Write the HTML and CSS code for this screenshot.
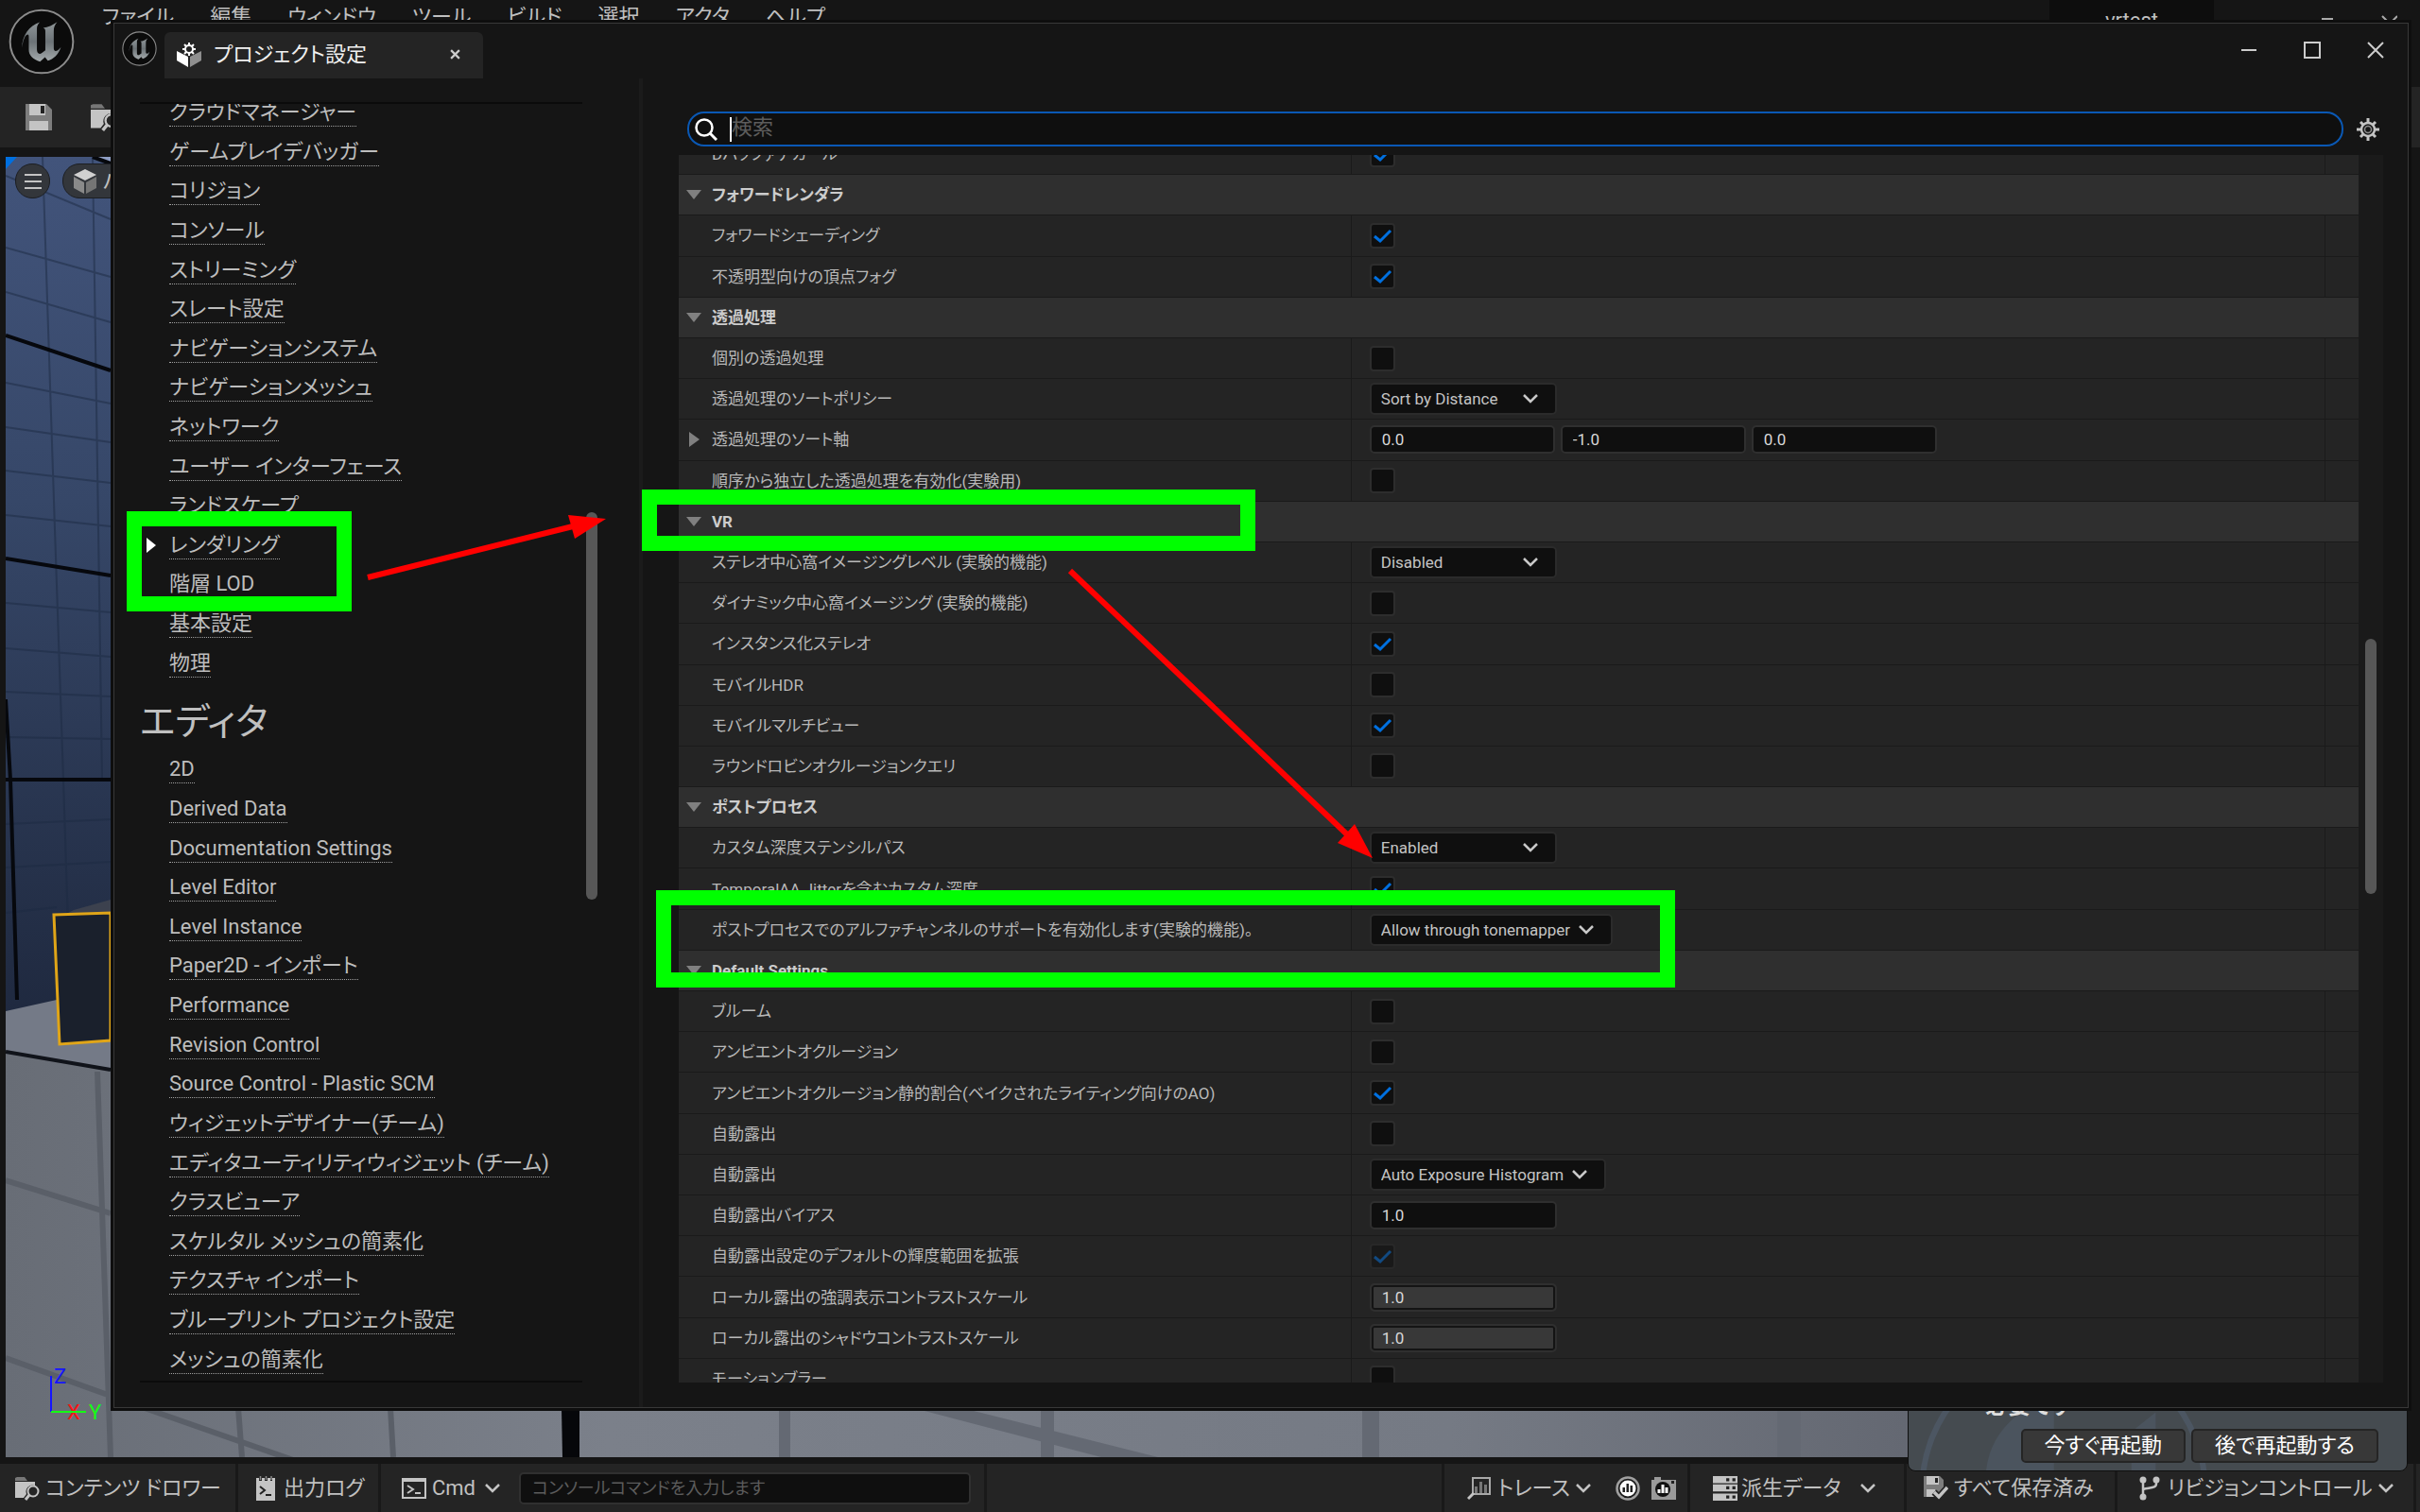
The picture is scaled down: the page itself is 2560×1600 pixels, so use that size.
FILE: index.html
```html
<!DOCTYPE html>
<html lang="ja">
<head>
  <meta charset="UTF-8">
  <meta name="viewport" content="width=device-width, initial-scale=1.0">
  <title>プロジェクト設定</title>
  <link rel="stylesheet" href="styles.css">
</head>
<body>
  <!-- Icon sprites -->
  <svg class="sprites" aria-hidden="true">
    <defs>
      <linearGradient id="metal" x1="0" y1="0" x2="0" y2="1">
        <stop offset="0" stop-color="#8f9699"/>
        <stop offset="0.5" stop-color="#6c7377"/>
        <stop offset="1" stop-color="#a3a9ab"/>
      </linearGradient>
    </defs>
    <symbol id="i-logo" viewBox="26 26 212 212">
      <circle cx="132" cy="132" r="101" fill="#0b0b0b" stroke="#8c8c8c" stroke-width="6"/>
      <path fill="url(#metal)" d="M69 152C70 112 92 82 126 70C118 78 117 84 117 92V158C117 170 125 175 133 168L144 160V98C144 92 141 89 137 88C152 86 168 79 182 69C174 78 171 86 171 98V154C172 168 184 162 194 150C186 174 170 188 152 193L143 182L127 196C104 190 91 176 91 158V116C91 106 84 108 78 118C74 126 71 138 69 152Z"/>
    </symbol>
    <symbol id="i-settings" viewBox="0 0 26 26">
      <path d="M0 9L12 15V26L0 19Z" fill="#fff"/>
      <path d="M26 9L14 15V26L26 19Z" fill="#8f8f8f"/>
      <circle cx="13" cy="7" r="4" fill="none" stroke="#fff" stroke-width="2"/>
      <path d="M13 0V3M13 11V14M6 7H9M17 7H20M8 2L10 4M16 10L18 12M18 2L16 4M10 10L8 12" stroke="#fff" stroke-width="2"/>
    </symbol>
    <symbol id="i-save" viewBox="0 0 30 30">
      <path d="M1 1H23L29 7V29H1Z" fill="#7d7d7d"/>
      <path d="M5 1H22V13H5Z" fill="#c4c4c4"/>
      <path d="M17 3H21V11H17Z" fill="#222"/>
      <path d="M5 19H25V29H5Z" fill="#c4c4c4"/>
    </symbol>
    <symbol id="i-folder" viewBox="0 0 26 26">
      <path d="M0 5V2L2 1H10L13 5Z" fill="#777"/>
      <path d="M0 6H21V10A7 7 0 0 0 12 19L9 23H0Z" fill="#c4c4c4"/>
      <circle cx="19" cy="16" r="5.500" fill="none" stroke="#c4c4c4" stroke-width="2"/>
      <path d="M15 20L11 25" stroke="#c4c4c4" stroke-width="3"/>
    </symbol>
    <symbol id="i-log" viewBox="0 0 20 26">
      <path d="M0 2H3V5H6V2H9V5H12V2H15V5H17V2H20V26H0Z" fill="#c4c4c4"/>
      <path d="M4.500 0V4M10.500 0V4M16 0V4" stroke="#8a8a8a" stroke-width="1.500"/>
      <path d="M4 11L9 15L4 19M10 20H16" fill="none" stroke="#222" stroke-width="2"/>
    </symbol>
    <symbol id="i-cmd" viewBox="0 0 26 22">
      <path d="M1 1H25V21H1Z" fill="none" stroke="#c4c4c4" stroke-width="2"/>
      <path d="M1 1H25V4H1Z" fill="#c4c4c4"/>
      <path d="M6 8L12 12L6 16M14 16H20" fill="none" stroke="#c4c4c4" stroke-width="2"/>
    </symbol>
    <symbol id="i-chevron" viewBox="0 0 16 10">
      <path d="M1 1L8 8L15 1" fill="none" stroke="#c4c4c4" stroke-width="2.500"/>
    </symbol>
    <symbol id="i-trace" viewBox="0 0 26 24">
      <path d="M6 1H24V18H6Z" fill="none" stroke="#a8a8a8" stroke-width="2"/>
      <path d="M8 17V10H11V17ZM13 17V5H16V17ZM18 17V8H21V17Z" fill="#777"/>
      <path d="M1 23L7 17" stroke="#c4c4c4" stroke-width="3"/>
    </symbol>
    <symbol id="i-live" viewBox="0 0 26 26">
      <circle cx="13" cy="13" r="11.500" fill="#1a1a1a" stroke="#a0a0a0" stroke-width="2.500"/>
      <circle cx="13" cy="13" r="8.500" fill="#fff"/>
      <path d="M7.500 17V12H10V17ZM11.500 17V8H14V17ZM15.500 17V10H18V17Z" fill="#222"/>
    </symbol>
    <symbol id="i-snapshot" viewBox="0 0 26 26">
      <path d="M0 4H3V1H10V4H26V25H0Z" fill="#9a9a9a"/>
      <circle cx="12" cy="14" r="8" fill="#111"/>
      <path d="M6.500 18V14H9.500V18ZM10.500 18V9H13.500V18ZM14.500 18V12H17.500V18Z" fill="#fff"/>
      <path d="M21 5H24V8H21Z" fill="#222"/>
    </symbol>
    <symbol id="i-data" viewBox="0 0 24 24">
      <path d="M0 0H24V7H0ZM0 8H24V15H0ZM0 17H24V24H0Z" fill="#c4c4c4"/>
      <path d="M13 2H16V5H13ZM19 2H22V5H19ZM13 10H16V13H13ZM19 10H22V13H19ZM13 19H16V22H13ZM19 19H22V22H19Z" fill="#222"/>
    </symbol>
    <symbol id="i-saved" viewBox="0 0 26 26">
      <path d="M0 0H17L21 4V22H0Z" fill="#7d7d7d"/>
      <path d="M3 0H16V9H3ZM3 14H12V22H3Z" fill="#c4c4c4"/>
      <path d="M12 2H15V7H12Z" fill="#222"/>
      <path d="M11 17L16 22L25 12" fill="none" stroke="#242424" stroke-width="7"/>
      <path d="M11 17L16 22L25 12" fill="none" stroke="#c4c4c4" stroke-width="3.500"/>
    </symbol>
    <symbol id="i-branch" viewBox="0 0 22 26">
      <circle cx="4" cy="4" r="3.500" fill="#c4c4c4"/>
      <circle cx="18" cy="4" r="3.500" fill="#c4c4c4"/>
      <circle cx="4" cy="22" r="3.500" fill="#c4c4c4"/>
      <path d="M4 4V22M18 4V8C18 13 12 12 4 14" fill="none" stroke="#c4c4c4" stroke-width="2.500"/>
    </symbol>
    <symbol id="i-gear" viewBox="0 0 24 24">
      <path d="M12 0V5M12 19V24M0 12H5M19 12H24M4 4L7 7M17 17L20 20M20 4L17 7M7 17L4 20" stroke="#c4c4c4" stroke-width="3"/>
      <circle cx="12" cy="12" r="7" fill="none" stroke="#c4c4c4" stroke-width="2.500"/>
      <circle cx="12" cy="12" r="3.500" fill="none" stroke="#8a8a8a" stroke-width="1.500"/>
    </symbol>
    <symbol id="i-search" viewBox="0 0 24 24">
      <circle cx="10" cy="10" r="8.500" fill="none" stroke="#fff" stroke-width="2.500"/>
      <path d="M16 16L23 23" stroke="#fff" stroke-width="3"/>
    </symbol>
  </svg>

  <div class="editor">
    <!-- Level editor title bar -->
    <header class="titlebar">
      <svg class="logo"><use href="#i-logo"/></svg>
      <nav class="menubar">
        <button>ファイル</button>
        <button>編集</button>
        <button>ウィンドウ</button>
        <button>ツール</button>
        <button>ビルド</button>
        <button>選択</button>
        <button>アクタ</button>
        <button>ヘルプ</button>
      </nav>
      <div class="project-name">vrtest</div>
      <div class="editor-controls">
        <svg viewBox="0 0 80 20"><path d="M0 9H12M64 6L80 22M80 6L64 22" fill="none" stroke="#aaa" stroke-width="2"/></svg>
      </div>
    </header>

    <div class="toolbar">
      <svg class="tool"><use href="#i-save"/></svg>
      <svg class="tool"><use href="#i-folder"/></svg>
    </div>

    <!-- Viewport scene -->
    <main class="viewport">
      <svg class="scene" viewBox="6 166 2541 1376" preserveAspectRatio="xMinYMin slice">
        <defs>
          <linearGradient id="wall" x1="0" y1="0" x2="0" y2="1">
            <stop offset="0" stop-color="#42547b"/>
            <stop offset="0.4" stop-color="#364768"/>
            <stop offset="1" stop-color="#1f293f"/>
          </linearGradient>
          <linearGradient id="floor" x1="0" y1="0" x2="1" y2="0">
            <stop offset="0" stop-color="#686d76"/>
            <stop offset="0.25" stop-color="#7b808a"/>
            <stop offset="0.6" stop-color="#757a84"/>
            <stop offset="0.8" stop-color="#636771"/>
            <stop offset="1" stop-color="#5d616b"/>
          </linearGradient>
        </defs>
        <path d="M6 166H2552V1075H6Z" fill="url(#wall)"/>
        <path d="M98 166H117V174Z" fill="#8f9fc4"/>
        <path d="M6 186L117 232M6 262L117 293M6 309L117 341M6 405L117 427M6 452L117 468M6 498L117 511M6 545L117 557M6 638L117 648M6 686L117 695M6 732L117 737M6 780L117 782M6 872L117 867M6 918L117 912M6 966L60 960M45 166L58 560L67 825L72 980M98 166L104 560L108 825" fill="none" stroke="#1c2942" stroke-width="2" opacity="0.5"/>
        <path d="M6 355L117 392M6 591L117 609M6 825H117M6 740L11 825L18 1058M98 166L117 173" fill="none" stroke="#06080d" stroke-width="4"/>
        <path d="M78 963L117 952V966H72Z" fill="#3c414e"/>
        <path d="M6 1070L60 1058H117V1140H6Z" fill="#747a87"/>
        <path d="M57 968L117 966V1101L63 1105Z" fill="#1a202c" stroke="#e0a518" stroke-width="3"/>
        <path d="M6 1113L117 1132H2552V1542H6Z" fill="url(#floor)"/>
        <path d="M6 1113L117 1132" stroke="#10131a" stroke-width="4"/>
        <path d="M103 1134L117 1542M6 1249L117 1284M6 1437L150 1489L310 1545M252 1490L256 1542M413 1490L416 1542" fill="none" stroke="#5a5f68" stroke-width="6"/>
        <path d="M594 1490H613V1542H595Z" fill="#06070a"/>
        <path d="M824 1490H836V1542H824ZM1101 1490H1115V1542H1101ZM1441 1490H1459V1542H1441ZM1880 1490H1905V1542H1880ZM978 1493H1030L1225 1542H1165Z" fill="#646973"/>
        <path d="M6 166H18L6 179Z" fill="#0070e0"/>
        <!-- axis gizmo -->
        <path d="M54 1456V1494" stroke="#1414ff" stroke-width="2"/>
        <text class="axis" x="71" y="1502" fill="#ff1414">X</text>
        <path d="M54 1494H91" stroke="#14ff14" stroke-width="2"/>
        <text class="axis" x="57" y="1464" fill="#1414ff">Z</text>
        <text class="axis" x="94" y="1502" fill="#14ff14">Y</text>
      </svg>
      <div class="viewport-tools">
        <button class="round" aria-label="ビューポートオプション">
          <svg viewBox="0 0 18 16"><path d="M0 1H18M0 8H18M0 15H18" stroke="#c4c4c4" stroke-width="2"/></svg>
        </button>
        <button class="pill">
          <svg viewBox="0 0 26 26"><path d="M13 0L25 6L13 12L1 6Z" fill="#d0d0d0"/><path d="M1 8L12 14V26L1 20Z" fill="#8a8a8a"/><path d="M25 8L14 14V26L25 20Z" fill="#757575"/></svg>
          パースペクティブ
        </button>
      </div>
    </main>

    <!-- Status bar -->
    <footer class="statusbar">
      <button class="status drawer"><svg class="icon"><use href="#i-folder"/></svg>コンテンツ ドロワー</button>
      <button class="status log"><svg class="icon narrow"><use href="#i-log"/></svg>出力ログ</button>
      <div class="status console">
        <button><svg class="icon"><use href="#i-cmd"/></svg>Cmd<svg class="chevron"><use href="#i-chevron"/></svg></button>
        <input type="text" placeholder="コンソールコマンドを入力します" aria-label="コンソールコマンド">
      </div>
      <div class="spacer"></div>
      <div class="status trace">
        <button><svg class="icon"><use href="#i-trace"/></svg>トレース<svg class="chevron"><use href="#i-chevron"/></svg></button>
        <button aria-label="トレース開始"><svg class="icon"><use href="#i-live"/></svg></button>
        <button aria-label="スナップショット"><svg class="icon"><use href="#i-snapshot"/></svg></button>
      </div>
      <button class="status derived"><svg class="icon"><use href="#i-data"/></svg>派生データ<svg class="chevron"><use href="#i-chevron"/></svg></button>
      <button class="status saved"><svg class="icon"><use href="#i-saved"/></svg>すべて保存済み</button>
      <button class="status revision"><svg class="icon"><use href="#i-branch"/></svg>リビジョンコントロール<svg class="chevron"><use href="#i-chevron"/></svg></button>
    </footer>
  </div>

  <!-- Restart notification -->
  <div class="toast">
    <svg class="toast-art" viewBox="0 0 530 80" preserveAspectRatio="xMinYMax slice">
      <circle cx="160" cy="100" r="146" fill="none" stroke="#4c5662" stroke-width="6"/>
      <path d="M80 80C85 40 110 20 150 0V80Z" fill="#4b545e"/>
      <path d="M230 80V40L255 20V80Z" fill="#4b545e"/>
    </svg>
    <p>必要です</p>
    <div class="toast-buttons">
      <button>今すぐ再起動</button>
      <button>後で再起動する</button>
    </div>
  </div>

  <!-- Project settings window -->
  <section class="dialog">
    <div class="dialog-inner">
      <header class="dialog-head">
        <svg class="dialog-logo"><use href="#i-logo"/></svg>
        <div class="tab">
          <svg class="icon"><use href="#i-settings"/></svg>
          <span>プロジェクト設定</span>
          <button aria-label="タブを閉じる"><svg viewBox="0 0 10 10"><path d="M1 1L9 9M9 1L1 9" stroke="#ccc" stroke-width="2"/></svg></button>
        </div>
        <div class="window-controls">
          <button aria-label="最小化"><svg viewBox="0 0 18 18"><path d="M1 9H17" stroke="#ccc" stroke-width="2"/></svg></button>
          <button aria-label="最大化"><svg viewBox="0 0 18 18"><path d="M1 1H17V17H1Z" fill="none" stroke="#ccc" stroke-width="2"/></svg></button>
          <button aria-label="閉じる"><svg viewBox="0 0 18 18"><path d="M1 1L17 17M17 1L1 17" stroke="#ccc" stroke-width="2"/></svg></button>
        </div>
      </header>

      <div class="dialog-body">
        <aside class="sidebar">
          <div class="categories">
            <ul class="engine">
              <li><a href="#">クラウドマネージャー</a></li>
              <li><a href="#">ゲームプレイデバッガー</a></li>
              <li><a href="#">コリジョン</a></li>
              <li><a href="#">コンソール</a></li>
              <li><a href="#">ストリーミング</a></li>
              <li><a href="#">スレート設定</a></li>
              <li><a href="#">ナビゲーションシステム</a></li>
              <li><a href="#">ナビゲーションメッシュ</a></li>
              <li><a href="#">ネットワーク</a></li>
              <li><a href="#">ユーザー インターフェース</a></li>
              <li><a href="#">ランドスケープ</a></li>
              <li class="current"><a href="#">レンダリング</a></li>
              <li><a href="#">階層 LOD</a></li>
              <li><a href="#">基本設定</a></li>
              <li><a href="#">物理</a></li>
            </ul>
            <h2>エディタ</h2>
            <ul class="editor-list">
              <li><a href="#">2D</a></li>
              <li><a href="#">Derived Data</a></li>
              <li><a href="#">Documentation Settings</a></li>
              <li><a href="#">Level Editor</a></li>
              <li><a href="#">Level Instance</a></li>
              <li><a href="#">Paper2D - インポート</a></li>
              <li><a href="#">Performance</a></li>
              <li><a href="#">Revision Control</a></li>
              <li><a href="#">Source Control - Plastic SCM</a></li>
              <li><a href="#">ウィジェットデザイナー(チーム)</a></li>
              <li><a href="#">エディタユーティリティウィジェット (チーム)</a></li>
              <li><a href="#">クラスビューア</a></li>
              <li><a href="#">スケルタル メッシュの簡素化</a></li>
              <li><a href="#">テクスチャ インポート</a></li>
              <li><a href="#">ブループリント プロジェクト設定</a></li>
              <li><a href="#">メッシュの簡素化</a></li>
            </ul>
          </div>
          <div class="scrollbar"><div class="thumb" style="top: 32%; height: 30.300%"></div></div>
        </aside>

        <div class="panel">
          <div class="search-row">
            <div class="search">
              <svg class="search-icon"><use href="#i-search"/></svg>
              <span class="caret"></span>
              <input type="text" placeholder="検索" aria-label="検索">
            </div>
            <button class="gear" aria-label="表示オプション"><svg viewBox="0 0 24 24"><use href="#i-gear"/></svg></button>
          </div>

          <div class="details">
            <div class="details-view">
              <div class="rows">
                <div class="row"><label for="dbuffer">Dバッファデカール</label><div class="value"><input type="checkbox" id="dbuffer" checked></div></div>

                <h3 class="group">フォワードレンダラ</h3>
                <div class="row"><label for="fwd">フォワードシェーディング</label><div class="value"><input type="checkbox" id="fwd" checked></div></div>
                <div class="row"><label for="fog">不透明型向けの頂点フォグ</label><div class="value"><input type="checkbox" id="fog" checked></div></div>

                <h3 class="group">透過処理</h3>
                <div class="row"><label for="sep">個別の透過処理</label><div class="value"><input type="checkbox" id="sep"></div></div>
                <div class="row"><label for="policy">透過処理のソートポリシー</label><div class="value"><select id="policy"><option>Sort by Distance</option></select></div></div>
                <div class="row expandable"><label for="axis-x">透過処理のソート軸</label><div class="value vector"><input type="text" id="axis-x" value="0.0"><input type="text" value="-1.0" aria-label="Y"><input type="text" value="0.0" aria-label="Z"></div></div>
                <div class="row"><label for="oit">順序から独立した透過処理を有効化(実験用)</label><div class="value"><input type="checkbox" id="oit"></div></div>

                <h3 class="group">VR</h3>
                <div class="row"><label for="fov-level">ステレオ中心窩イメージングレベル (実験的機能)</label><div class="value"><select id="fov-level"><option>Disabled</option></select></div></div>
                <div class="row"><label for="fov-dyn">ダイナミック中心窩イメージング (実験的機能)</label><div class="value"><input type="checkbox" id="fov-dyn"></div></div>
                <div class="row"><label for="stereo">インスタンス化ステレオ</label><div class="value"><input type="checkbox" id="stereo" checked></div></div>
                <div class="row"><label for="hdr">モバイルHDR</label><div class="value"><input type="checkbox" id="hdr"></div></div>
                <div class="row"><label for="multiview">モバイルマルチビュー</label><div class="value"><input type="checkbox" id="multiview" checked></div></div>
                <div class="row"><label for="robin">ラウンドロビンオクルージョンクエリ</label><div class="value"><input type="checkbox" id="robin"></div></div>

                <h3 class="group">ポストプロセス</h3>
                <div class="row"><label for="stencil">カスタム深度ステンシルパス</label><div class="value"><select id="stencil"><option>Enabled</option></select></div></div>
                <div class="row"><label for="jitter">TemporalAA Jitterを含むカスタム深度</label><div class="value"><input type="checkbox" id="jitter" checked></div></div>
                <div class="row"><label for="alpha">ポストプロセスでのアルファチャンネルのサポートを有効化します(実験的機能)。</label><div class="value"><select id="alpha"><option>Allow through tonemapper</option></select></div></div>

                <h3 class="group">Default Settings</h3>
                <div class="row"><label for="bloom">ブルーム</label><div class="value"><input type="checkbox" id="bloom"></div></div>
                <div class="row"><label for="ao">アンビエントオクルージョン</label><div class="value"><input type="checkbox" id="ao"></div></div>
                <div class="row"><label for="ao-static">アンビエントオクルージョン静的割合(ベイクされたライティング向けのAO)</label><div class="value"><input type="checkbox" id="ao-static" checked></div></div>
                <div class="row"><label for="exposure">自動露出</label><div class="value"><input type="checkbox" id="exposure"></div></div>
                <div class="row"><label for="exposure-mode">自動露出</label><div class="value"><select id="exposure-mode"><option>Auto Exposure Histogram</option></select></div></div>
                <div class="row"><label for="bias">自動露出バイアス</label><div class="value"><input type="text" id="bias" value="1.0"></div></div>
                <div class="row"><label for="extend">自動露出設定のデフォルトの輝度範囲を拡張</label><div class="value"><input type="checkbox" id="extend" checked disabled></div></div>
                <div class="row"><label for="highlight">ローカル露出の強調表示コントラストスケール</label><div class="value"><input type="text" class="slider" id="highlight" value="1.0"></div></div>
                <div class="row"><label for="shadow">ローカル露出のシャドウコントラストスケール</label><div class="value"><input type="text" class="slider" id="shadow" value="1.0"></div></div>
                <div class="row"><label for="blur">モーションブラー</label><div class="value"><input type="checkbox" id="blur"></div></div>
              </div>
            </div>
            <div class="scrollbar"><div class="thumb" style="top: 39.400%; height: 20.800%"></div></div>
          </div>
        </div>
      </div>
    </div>
  </section>

  <!-- Highlight boxes and arrows -->
  <svg class="marks" viewBox="0 0 2560 1600" preserveAspectRatio="xMinYMin meet">
    <g fill="none" stroke="#00ff00" stroke-width="16">
      <rect x="142" y="549" width="222" height="90"/>
      <rect x="687" y="526" width="633" height="49"/>
      <rect x="702" y="950" width="1062" height="87"/>
    </g>
    <g stroke="#ff0000" stroke-width="6">
      <path d="M389 611L606 557"/>
      <path d="M1132 604L1426 884"/>
    </g>
    <g fill="#ff0000">
      <path d="M641 549L601 545L608 570Z"/>
      <path d="M1452 908L1433 872L1415 892Z"/>
    </g>
  </svg>
</body>
</html>
```
FILE: styles.css
```css
* {
  margin: 0;
  padding: 0;
  box-sizing: border-box;
}
body {
  background: #151515;
  color: #c0c0c0;
  font-family: Roboto, "Noto Sans CJK JP", sans-serif;
  font-size: 22px;
  line-height: 28px;
  font-feature-settings: "palt";
  overflow: hidden;
}
button, input, select {
  font: inherit;
  font-feature-settings: inherit;
  color: inherit;
  background: none;
  border: none;
  outline: none;
}
svg {
  display: block;
  flex: none;
}
ul {
  list-style: none;
}
.sprites {
  position: absolute;
  width: 0;
  height: 0;
}

/* Level editor */
.editor {
  display: flex;
  flex-direction: column;
  height: 100vh;
}
.titlebar {
  display: flex;
  align-items: flex-start;
  height: 92px;
}
.logo {
  width: 70px;
  height: 70px;
  margin: 9px 29px 0 9px;
}
.menubar {
  display: flex;
  gap: 38px;
  padding-top: 4px;
}
.project-name {
  width: 174px;
  height: 44px;
  margin-left: auto;
  padding-top: 8px;
  background: #0d0d0d;
  text-align: center;
}
.editor-controls {
  padding: 11px 24px 0 114px;
}
.editor-controls svg {
  width: 80px;
  height: 20px;
}
.toolbar {
  display: flex;
  align-items: center;
  gap: 40px;
  height: 64px;
  padding-left: 26px;
  background: #242424;
}
.tool {
  width: 30px;
  height: 30px;
}
.viewport {
  position: relative;
  flex: 1;
  min-height: 0;
  margin: 10px 13px 7px 6px;
}
.scene {
  width: 100%;
  height: 100%;
}
.axis {
  font-size: 22px;
}
.viewport-tools {
  position: absolute;
  top: 7px;
  left: 10px;
  display: flex;
  gap: 13px;
  width: 101px;
  overflow: hidden;
}
.viewport-tools button {
  display: flex;
  flex: none;
  align-items: center;
  height: 37px;
  background: #33363b;
  border: 1px solid #1c1e22;
  border-radius: 18px;
}
.round {
  width: 37px;
  justify-content: center;
}
.round svg {
  width: 18px;
  height: 16px;
}
.pill {
  gap: 6px;
  padding: 0 10px;
}
.pill svg {
  width: 26px;
  height: 26px;
}

/* Status bar */
.statusbar {
  display: flex;
  height: 51px;
  padding-right: 4px;
  background: #242424;
}
.status, .status button {
  display: flex;
  align-items: center;
  gap: 6px;
  white-space: nowrap;
}
.status {
  padding: 0 16px;
  border-right: 3px solid #191919;
}
.icon {
  width: 26px;
  height: 26px;
}
.icon.narrow {
  width: 20px;
}
.chevron {
  width: 16px;
  height: 10px;
}
.status.drawer {
  width: 252px;
}
.status.log {
  width: 151px;
  padding-left: 19px;
  gap: 9px;
}
.status.console {
  gap: 20px;
  padding: 0 14px 0 22px;
}
.console .chevron {
  margin-left: 4px;
}
.console input {
  width: 478px;
  height: 34px;
  padding: 0 12px;
  background: #0f0f0f;
  border: 2px solid #303030;
  border-radius: 5px;
  font-size: 18px;
}
.console input::placeholder {
  color: #5c5c5c;
}
.spacer {
  flex: 1;
  border-right: 3px solid #191919;
}
.status.trace {
  gap: 12px;
  padding: 0 12px 0 24px;
}
.trace button:first-child {
  margin-right: 14px;
}
.status.derived {
  width: 229px;
  padding: 0 0 0 24px;
  gap: 4px;
}
.derived .chevron {
  margin-left: 16px;
}
.status.saved {
  width: 223px;
  padding: 0 0 0 18px;
}
.status.revision {
  width: 316px;
  padding: 0 0 0 21px;
}

/* Restart notification */
.toast {
  position: absolute;
  right: 13px;
  bottom: 43px;
  width: 529px;
  padding: 0 30px 8px;
  background: #454b50;
  border: 1px solid #0f0f0f;
  border-radius: 8px;
  overflow: hidden;
  color: #fff;
}
.toast-art {
  position: absolute;
  inset: 0;
  width: 100%;
  height: 100%;
}
.toast p {
  position: relative;
  padding-left: 51px;
  margin-bottom: 10px;
  font-size: 24px;
  font-weight: 700;
  color: #ddd;
}
.toast-buttons {
  position: relative;
  display: flex;
  justify-content: flex-end;
  gap: 6px;
}
.toast-buttons button {
  height: 36px;
  padding: 0 23px;
  background: #383838;
  border: 2px solid #252525;
  border-radius: 5px;
  line-height: 30px;
}

/* Project settings window */
.dialog {
  position: absolute;
  inset: 21px 9px 107px 117px;
  padding: 3px;
  background: #0e0e0e;
}
.dialog-inner {
  display: flex;
  flex-direction: column;
  height: 100%;
  background: #151515;
  border: 1px solid #383838;
}
.dialog-head {
  display: flex;
  align-items: flex-start;
  height: 58px;
  padding-left: 8px;
}
.dialog-logo {
  width: 37px;
  height: 37px;
  margin: 8px 8px 0 0;
}
.tab {
  display: flex;
  align-items: center;
  gap: 13px;
  width: 337px;
  height: 49px;
  margin-top: 9px;
  padding: 0 24px 2px 13px;
  background: #242424;
  border-radius: 6px 6px 0 0;
  color: #f0f0f0;
}
.tab button {
  margin-left: auto;
}
.tab button svg {
  width: 11px;
  height: 11px;
}
.window-controls {
  display: flex;
  gap: 49px;
  margin-left: auto;
  padding: 19px 25px 0 0;
}
.window-controls svg {
  width: 18px;
  height: 18px;
}
.dialog-body {
  display: flex;
  flex: 1;
  min-height: 0;
}

/* Category list */
.sidebar {
  display: flex;
  flex: 0 0 559px;
  padding: 25px 42px 26px 27px;
  border-right: 4px solid #1b1b1b;
}
.categories {
  flex: 1;
  overflow: hidden;
  border-top: 2px solid #0b0b0b;
  border-bottom: 2px solid #0b0b0b;
}
.categories ul {
  display: grid;
  grid-auto-rows: 1fr;
  align-items: center;
  padding-left: 31px;
}
.categories .engine {
  min-height: 624px;
  margin-top: -11px;
}
.categories .editor-list {
  min-height: 666px;
}
.categories a {
  display: inline-block;
  height: 29px;
  border-bottom: 1px dotted #a0a0a0;
  color: #bdbdbd;
  text-decoration: none;
  white-space: nowrap;
  vertical-align: top;
}
.categories .current {
  display: flex;
  align-items: center;
  gap: 14px;
  margin-left: -24px;
}
.current::before {
  content: "";
  border: 8px solid transparent;
  border-left: 10px solid #fff;
  border-right: 0;
}
.categories h2 {
  padding-top: 12px;
  font-size: 39px;
  font-weight: 400;
  line-height: 59px;
}
.scrollbar {
  position: relative;
  width: 26px;
}
.thumb {
  position: absolute;
  left: 7px;
  width: 12px;
  background: #575757;
  border-radius: 6px;
}
.sidebar .scrollbar {
  width: 18px;
}
.sidebar .thumb {
  left: 4px;
}

/* Details panel */
.panel {
  display: flex;
  flex-direction: column;
  flex: 1;
  min-width: 0;
  padding: 35px 26px 26px 38px;
}
.search-row {
  display: flex;
  align-items: center;
  gap: 14px;
  margin-bottom: 9px;
  padding: 0 4px 0 9px;
}
.search {
  display: flex;
  align-items: center;
  flex: 1;
  height: 37px;
  padding: 0 6px;
  background: #0f0f0f;
  border: 2px solid #0a58b4;
  border-radius: 18px;
}
.search-icon {
  width: 24px;
  height: 24px;
}
.caret {
  width: 2px;
  height: 26px;
  margin-left: 13px;
  background: #fff;
}
.search input {
  flex: 1;
  height: 32px;
  padding-bottom: 4px;
}
.search input::placeholder {
  color: #5c5c5c;
}
.gear svg {
  width: 24px;
  height: 24px;
}
.details {
  display: flex;
  flex: 1;
  min-height: 0;
}
.details .scrollbar {
  background: #1a1a1a;
}
.details-view {
  flex: 1;
  overflow: hidden;
}
.rows {
  display: grid;
  grid-auto-rows: 1fr;
  min-height: 1339px;
  margin-top: -22px;
  font-size: 17px;
}
.row {
  display: grid;
  grid-template-columns: 2fr 3fr;
  align-items: stretch;
  background: linear-gradient(#1a1a1a, #1a1a1a) right 35px top / 1px 100% no-repeat #242424;
  border-bottom: 1px solid #1a1a1a;
}
.row label {
  display: flex;
  align-items: center;
  padding-left: 35px;
  color: #b8b8b8;
  white-space: nowrap;
}
.value {
  display: flex;
  align-items: center;
  padding-left: 19px;
  border-left: 1px solid #1a1a1a;
}
.group {
  display: flex;
  align-items: center;
  gap: 11px;
  padding-left: 8px;
  background: #2f2f2f;
  border-bottom: 1px solid #1a1a1a;
  font-size: 17px;
  font-weight: 700;
  color: #cccccc;
}
.group::before {
  content: "";
  border: 8px solid transparent;
  border-top: 10px solid #808080;
  border-bottom: 0;
}
.expandable label {
  gap: 13px;
  padding-left: 11px;
}
.expandable label::before {
  content: "";
  border: 8px solid transparent;
  border-left: 11px solid #808080;
  border-right: 0;
}
.value input[type="checkbox"] {
  appearance: none;
  width: 27px;
  height: 27px;
  background: #0f0f0f;
  border: 2px solid #2d2d2d;
  border-radius: 4px;
}
.value input[type="checkbox"]:checked {
  background-image: url("data:image/svg+xml,%3Csvg xmlns='http://www.w3.org/2000/svg' viewBox='0 0 23 23'%3E%3Cpath d='M3 12L9 17L20 6' fill='none' stroke='%230070e0' stroke-width='3'/%3E%3C/svg%3E");
}
.value input[type="checkbox"]:disabled {
  opacity: 0.5;
}
.value input[type="text"] {
  width: 198px;
  height: 30px;
  padding: 0 11px;
  background: #0f0f0f;
  border: 2px solid #2f2f2f;
  border-radius: 5px;
  color: #d8d8d8;
}
.value input.slider {
  background: #383838;
  box-shadow: inset 0 0 0 2px #141414;
}
.vector {
  gap: 6px;
}
.value.vector input[type="text"] {
  width: 196px;
}
.value select {
  appearance: none;
  min-width: 198px;
  height: 34px;
  padding: 0 42px 0 10px;
  background: url("data:image/svg+xml,%3Csvg xmlns='http://www.w3.org/2000/svg' viewBox='0 0 16 10'%3E%3Cpath d='M1 1L8 8L15 1' fill='none' stroke='%23c8c8c8' stroke-width='2.500'/%3E%3C/svg%3E") right 18px center / 16px 10px no-repeat #0f0f0f;
  border: 2px solid #2b2b2b;
  border-radius: 5px;
  color: #c4c4c4;
}

/* Highlight boxes and arrows */
.marks {
  position: absolute;
  inset: 0;
  width: 100%;
  height: 100%;
  pointer-events: none;
}
```
